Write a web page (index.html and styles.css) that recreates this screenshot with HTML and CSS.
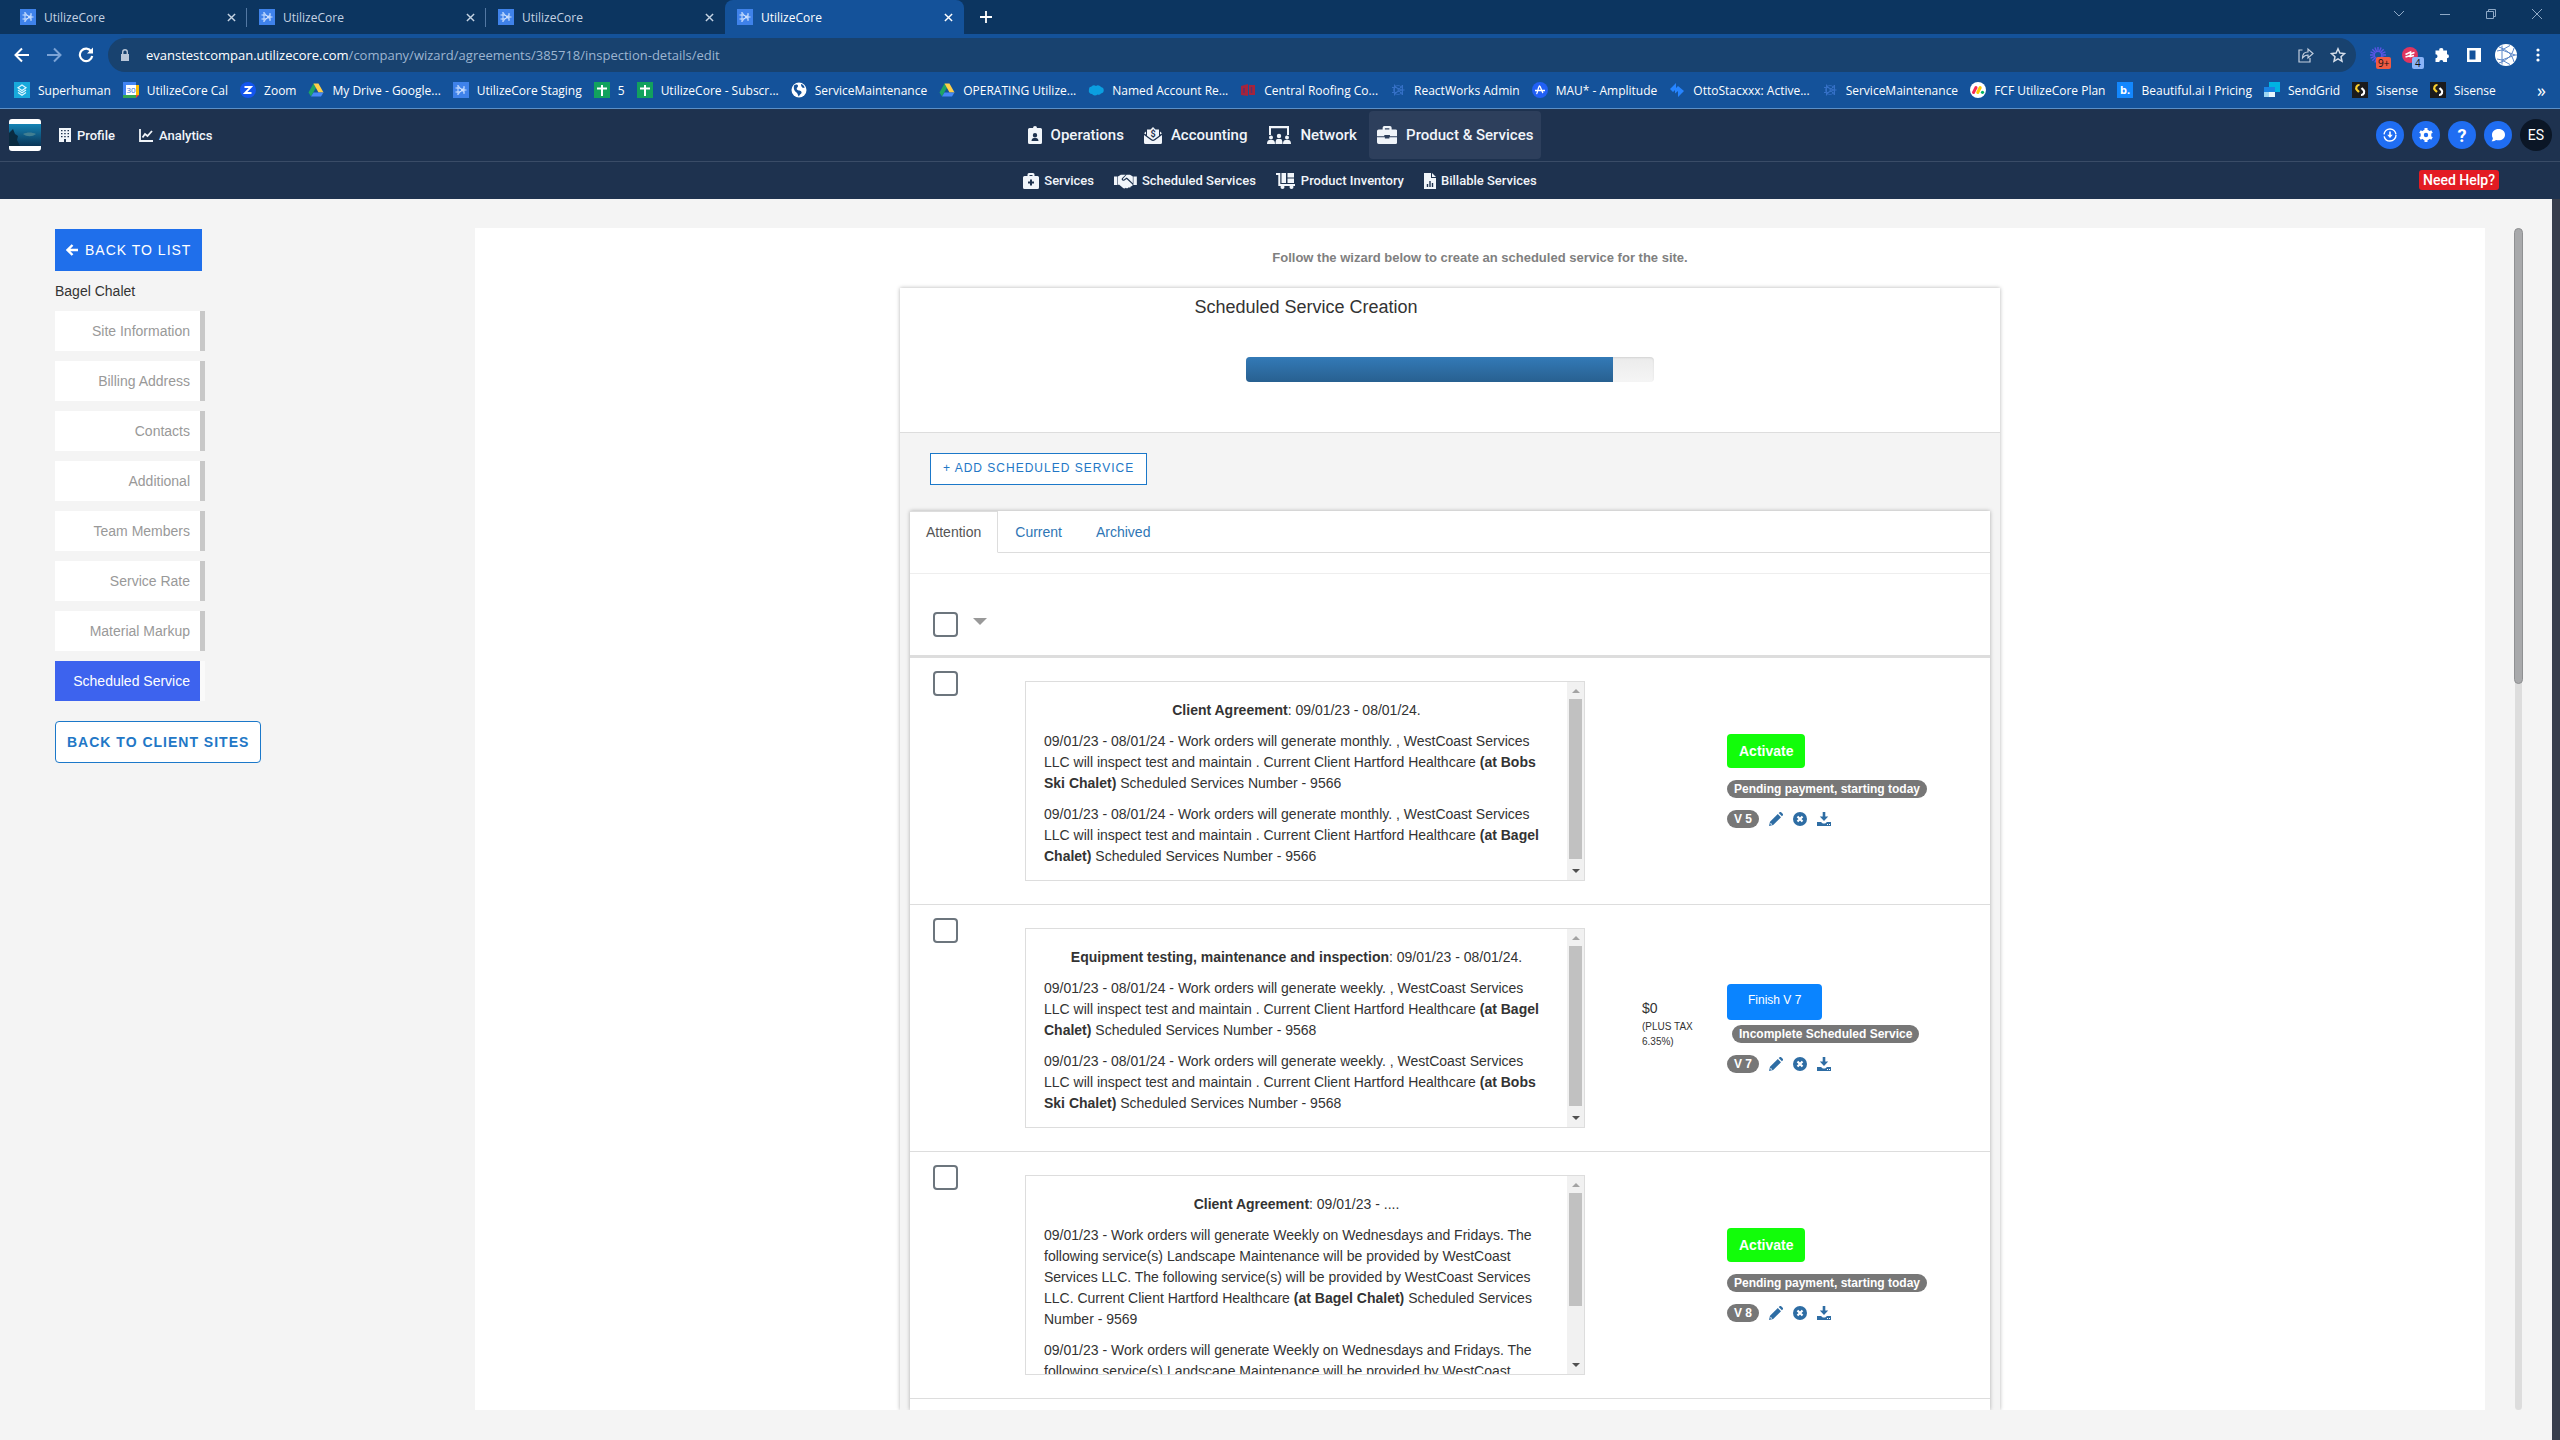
FILE: index.html
```html
<!DOCTYPE html>
<html lang="en">
<head>
    <meta charset="UTF-8">
    <meta name="viewport" content="width=device-width, initial-scale=1.0">
    <title>UtilizeCore</title>
    <link rel="stylesheet" href="styles.css">
</head>
<body>
    <!-- Shared icons -->
    <svg class="sprite" aria-hidden="true">
        <symbol id="close" viewBox="0 0 10 10"><path d="M1 1l8 8M9 1L1 9" fill="none" stroke="currentColor" stroke-width="1.6"/></symbol>
        <symbol id="core-lines" viewBox="0 0 16 16"><path d="M4.500 2.500v11M4.500 3l8 10M4.500 13l8-10M12.500 3v10M2 5.500h4l6 2.500-6 2.500H2M12 8h2.500" fill="none" stroke="currentColor" stroke-width="1"/><circle cx="8" cy="8" r="4.500" fill="none" stroke="currentColor" stroke-width=".8"/></symbol>
        <symbol id="core" viewBox="0 0 16 16"><path fill="#3f82ea" d="M0 0h16v16H0z"/><path d="M5 3v10M5 3.500l6 7M5 12.500l6-7M11 4v8M2.500 6H6l5 2-5 2H2.500M11 8h2.500" fill="none" stroke="#cfe2ff"/></symbol>
        <symbol id="drive" viewBox="0 0 16 16"><path fill="#1fa463" d="M5.500 1.500L0.500 10.500l2.500 4L8 5.700z"/><path fill="#ffcf48" d="M5.500 1.500h5l5 9h-5z"/><path fill="#4688f4" d="M3 14.500l2.500-4h10l-2.500 4z"/></symbol>
        <symbol id="sheet" viewBox="0 0 16 16"><path fill="#12a15d" d="M0 0h16v16H0z"/><path d="M8 3v11M3 6.500h10" stroke="#fff" stroke-width="2"/></symbol>
        <symbol id="sisense" viewBox="0 0 16 16"><path fill="#1b1b1d" d="M0 0h16v16H0z"/><path d="M7.500 3A3 3 0 0 0 5 8l2 2" fill="none" stroke="#f9cf2e" stroke-width="2.200"/><path d="M9.500 6l2 2a3 3 0 0 1-2.500 5" fill="none" stroke="#fff" stroke-width="2.200"/></symbol>
        <symbol id="pencil" viewBox="0 0 14 14"><path fill="currentColor" d="M0 14l1-4.200L8.800 2l3.200 3.200L4.200 13zM9.700 1.100L10.600.3a1.200 1.200 0 0 1 1.600 0l1.500 1.500a1.200 1.200 0 0 1 0 1.600l-.8.900z"/><path fill="#fff" d="M1.600 10.700l1.700 1.700-1.300.3-.7-.7z"/></symbol>
        <symbol id="remove" viewBox="0 0 14 14"><circle cx="7" cy="7" r="7" fill="currentColor"/><path d="M4.500 4.500l5 5M9.500 4.500l-5 5" stroke="#fff" stroke-width="2.200"/></symbol>
        <symbol id="download" viewBox="0 0 14 14"><path fill="currentColor" d="M5.700 0h2.600v4.500h2.900L7 9 2.800 4.500h2.900zM0 10h4l1.800 1.600h2.400L10 10h4v4H0z"/><path fill="#fff" d="M10 12h1v1h-1zM12 12h1v1h-1z"/></symbol>
    </svg>

    <header class="browser">
        <div class="tab-strip">
            <div class="browser-tab"><svg class="fav"><use href="#core"/></svg><span>UtilizeCore</span><button class="tab-close" aria-label="Close tab"><svg><use href="#close"/></svg></button></div>
            <div class="browser-tab"><svg class="fav"><use href="#core"/></svg><span>UtilizeCore</span><button class="tab-close" aria-label="Close tab"><svg><use href="#close"/></svg></button></div>
            <div class="browser-tab"><svg class="fav"><use href="#core"/></svg><span>UtilizeCore</span><button class="tab-close" aria-label="Close tab"><svg><use href="#close"/></svg></button></div>
            <div class="browser-tab selected"><svg class="fav"><use href="#core"/></svg><span>UtilizeCore</span><button class="tab-close" aria-label="Close tab"><svg><use href="#close"/></svg></button></div>
            <button class="new-tab" aria-label="New tab"><svg viewBox="0 0 12 12"><path d="M6 0v12M0 6h12" stroke="currentColor" stroke-width="1.800"/></svg></button>
            <div class="window-controls">
                <button aria-label="Search tabs"><svg viewBox="0 0 10 10"><path d="M0 2l5 5 5-5" fill="none" stroke="currentColor"/></svg></button>
                <button aria-label="Minimize"><svg viewBox="0 0 10 10"><path d="M0 5.500h10" stroke="currentColor"/></svg></button>
                <button aria-label="Restore"><svg viewBox="0 0 10 10"><path d="M.5 2.500h7v7h-7zM2.500 2.500v-2h7v7h-2" fill="none" stroke="currentColor"/></svg></button>
                <button aria-label="Close"><svg viewBox="0 0 10 10"><path d="M0 0l10 10M10 0L0 10" stroke="currentColor"/></svg></button>
            </div>
        </div>

        <div class="toolbar">
            <div class="history">
                <button aria-label="Back"><svg viewBox="0 0 16 16"><path d="M15 8H2M8 1.500L1.500 8 8 14.500" fill="none" stroke="#fff" stroke-width="2"/></svg></button>
                <button aria-label="Forward"><svg viewBox="0 0 16 16"><path d="M1 8h13M8 1.500L14.500 8 8 14.500" fill="none" stroke="#7ba3d6" stroke-width="2"/></svg></button>
                <button aria-label="Reload"><svg viewBox="0 0 16 16"><path d="M13.300 4.500A6.200 6.200 0 1 0 14.200 9" fill="none" stroke="#fff" stroke-width="2.200"/><path d="M15 0.500v6H9z" fill="#fff"/></svg></button>
            </div>
            <div class="omnibox">
                <svg class="lock" viewBox="0 0 10 12"><path fill="#b9c6d8" d="M1 5h8v7H1z"/><path d="M2.700 5V3a2.300 2.300 0 0 1 4.600 0v2" fill="none" stroke="#b9c6d8" stroke-width="1.400"/></svg>
                <div class="url" role="textbox" aria-label="Address" contenteditable="true" spellcheck="false">evanstestcompan.utilizecore.com<span>/company/wizard/agreements/385718/inspection-details/edit</span></div>
                <button aria-label="Share"><svg viewBox="0 0 16 16"><path d="M4.500 3H1v12h11v-4M4.500 11c0-4 2-6 5.500-6V2l5 4.500L10 11V8C7.500 8 6 9 4.500 11z" fill="none" stroke="#c3cfdf" stroke-width="1.200"/></svg></button>
                <button aria-label="Bookmark"><svg viewBox="0 0 16 16"><path d="M8 1.800l1.900 4.300 4.600.5-3.500 3.100 1 4.600L8 11.900l-4 2.400 1-4.600L1.500 6.600l4.600-.5z" fill="none" stroke="#d5deea" stroke-width="1.500"/></svg></button>
            </div>
            <div class="extensions">
                <button aria-label="Loom"><svg viewBox="0 0 16 16"><path d="M8 0v16M0 8h16M2.300 2.300l11.400 11.400M13.700 2.300L2.300 13.700M4.900.6l6.200 14.800M11.100.6L4.900 15.400M.6 4.900l14.800 6.200M15.400 4.900L.6 11.100" stroke="#5b55e6" stroke-width="1.400"/><circle cx="8" cy="8" r="3" fill="#14529a"/></svg><span class="ext-badge red">9+</span></button>
                <button aria-label="Mixmax"><svg viewBox="0 0 16 16"><circle cx="8" cy="8" r="8" fill="#e0355f"/><path d="M3.500 7.500l5-2.500v2l4-1.500M3.500 10l5-1.500v1l3.500-1" fill="none" stroke="#fff" stroke-width="1.600"/></svg><span class="ext-badge blue">4</span></button>
                <button aria-label="Extensions"><svg viewBox="0 0 16 16"><path fill="#fff" d="M1.500 3.500h3.800a2 2 0 1 1 3.900 0H13v3.800a2 2 0 1 1 0 4V15H9.300a2 2 0 1 0-4 0H1.500v-3.800a2 2 0 1 0 0-4z"/></svg></button>
                <button aria-label="Side panel"><svg viewBox="0 0 16 16"><path fill="#fff" d="M1 1h14v14H1zM3.500 3.500v9h6v-9z" fill-rule="evenodd"/></svg></button>
                <button aria-label="Account"><svg class="account" viewBox="0 0 22 22"><circle cx="11" cy="11" r="11" fill="#fff"/><path d="M7 1.500v19M7 6l13 5-13 5M2 7l5-1 8-4.500M2 15l5 1 8 4.500M20 11h2M4 3c8 3 13 7 15 15M4 19c8-3 13-7 15-15" fill="none" stroke="#5a86c8"/></svg></button>
                <button aria-label="Menu"><svg viewBox="0 0 16 16"><circle cx="8" cy="3" r="1.600" fill="#fff"/><circle cx="8" cy="8" r="1.600" fill="#fff"/><circle cx="8" cy="13" r="1.600" fill="#fff"/></svg></button>
            </div>
        </div>

        <nav class="bookmarks" aria-label="Bookmarks">
            <a href="#"><svg viewBox="0 0 16 16"><path fill="#18a9dc" d="M0 0h16v16H0z"/><path d="M8 3l4 2.700L8 8.500 4 5.700zM4 8l4 2.700L12 8M4 10.500l4 2.700 4-2.700" fill="none" stroke="#dff6ff" stroke-width="1.200"/></svg>Superhuman</a>
            <a href="#"><svg viewBox="0 0 16 16"><path fill="#4285f4" d="M0 0h13v3H0z"/><path fill="#4285f4" d="M0 3h3v10H0z"/><path fill="#fbbc04" d="M13 3h3v10h-3z"/><path fill="#34a853" d="M0 13h13v3H0z"/><path fill="#ea4335" d="M13 13h3l-3 3z"/><path fill="#fff" d="M3 3h10v10H3z"/><text x="8" y="11" text-anchor="middle" font-size="8" fill="#3470d6">30</text></svg>UtilizeCore Cal</a>
            <a href="#"><svg viewBox="0 0 16 16"><circle cx="8" cy="8" r="8" fill="#1355ee"/><path d="M4.500 5h6.500l-6 6h6.500" fill="none" stroke="#fff" stroke-width="1.800"/></svg>Zoom</a>
            <a href="#"><svg><use href="#drive"/></svg>My Drive - Google...</a>
            <a href="#"><svg><use href="#core"/></svg>UtilizeCore Staging</a>
            <a href="#"><svg><use href="#sheet"/></svg>5</a>
            <a href="#"><svg><use href="#sheet"/></svg>UtilizeCore - Subscr...</a>
            <a href="#"><svg viewBox="0 0 16 16"><circle cx="8" cy="8" r="7.500" fill="#fff"/><path fill="#14529a" d="M3 3.500c2-1.500 4-1 4 .5S5 6 6 7.500s4 .5 4.500 2.500-2 2-2.500 4.500c-1-.5-1-2.500-2-3.500S2 8.500 3 3.500zM10 2c2 .5 3.500 2 3.500 4-1.500 0-3.500-.5-3.500-4z"/></svg>ServiceMaintenance</a>
            <a href="#"><svg><use href="#drive"/></svg>OPERATING Utilize...</a>
            <a href="#"><svg viewBox="0 0 16 16"><path fill="#0b9fe0" d="M3.500 4.500A3.500 3.500 0 0 1 8 4a3.500 3.500 0 0 1 5 1 3.300 3.300 0 0 1 0 6.500 3 3 0 0 1-3.500 1A3.500 3.500 0 0 1 4 12a3 3 0 0 1-3-4 3 3 0 0 1 2.500-3.500z"/></svg>Named Account Re...</a>
            <a href="#"><svg viewBox="0 0 16 16"><path fill="#a5243c" d="M1 4l7-2v12l-7-1zM9 3h6v10H9z"/><path d="M4 6v5M11.500 5v6" stroke="#5d3168" stroke-width="1.500"/></svg>Central Roofing Co...</a>
            <a href="#"><svg class="dim"><use href="#core-lines"/></svg>ReactWorks Admin</a>
            <a href="#"><svg viewBox="0 0 16 16"><circle cx="8" cy="8" r="8" fill="#2160f5"/><path d="M3 8.500h10M4.500 12c1-1 2-8 3-8s2 5 3.500 7" fill="none" stroke="#fff" stroke-width="1.300"/></svg>MAU* - Amplitude</a>
            <a href="#"><svg viewBox="0 0 16 16"><path fill="#2684ff" d="M7 1v6l-3 3-3-3zM9 4l6 5-6 6V9L6 11.500V7z"/></svg>OttoStacxxx: Active...</a>
            <a href="#"><svg class="dim"><use href="#core-lines"/></svg>ServiceMaintenance</a>
            <a href="#"><svg viewBox="0 0 16 16"><circle cx="8" cy="8" r="8" fill="#fff"/><path d="M3.500 10.500L6 5.500" stroke="#f62b54" stroke-width="3" stroke-linecap="round"/><path d="M7.700 10.500l2.500-5" stroke="#ffcc00" stroke-width="3" stroke-linecap="round"/><circle cx="12.500" cy="10.300" r="1.600" fill="#00b365"/></svg>FCF UtilizeCore Plan</a>
            <a href="#"><svg viewBox="0 0 16 16"><path fill="#1388ff" d="M0 0h16v16H0z"/><text x="8" y="12" text-anchor="middle" font-size="11" font-weight="700" fill="#fff">b.</text></svg>Beautiful.ai I Pricing</a>
            <a href="#"><svg viewBox="0 0 16 16"><path fill="#9dd6f2" d="M0 5h5v10H0z"/><path fill="#e7f6fd" d="M5 10h6v5H5z"/><path fill="#1a82e2" d="M0 5h5v5H0zM5 5h6v5H5z"/><path fill="#00b3e3" d="M5 0h11v10h-5V5H5z"/></svg>SendGrid</a>
            <a href="#"><svg><use href="#sisense"/></svg>Sisense</a>
            <a href="#"><svg><use href="#sisense"/></svg>Sisense</a>
            <button class="more-bookmarks" aria-label="More bookmarks">»</button>
        </nav>
    </header>

    <div class="navbar">
        <div class="nav-left">
            <svg class="company-logo" viewBox="0 0 32 32">
                <defs><linearGradient id="sea" x1="0" y1="0" x2="0" y2="1"><stop offset="0" stop-color="#1583b4"/><stop offset="1" stop-color="#0a3557"/></linearGradient></defs>
                <path fill="#fff" d="M0 0h32v32H0z"/><path fill="url(#sea)" d="M0 5h32v22H0z"/>
                <path fill="#0a2b40" d="M0 14l4-4 2 5 3 2-1 4 3 6H0z"/><path fill="#417f92" d="M14 15c4-2 9-2 13 0-4 3-9 3-13 0z"/>
            </svg>
            <a class="nav-link" href="#"><svg viewBox="0 0 12 14"><path fill="currentColor" fill-rule="evenodd" d="M0 0h12v14H0zM2 2v1.300h1.500V2zm3.200 0v1.300h1.500V2zm3.300 0v1.300H10V2zM2 5v1.300h1.500V5zm3.200 0v1.300h1.500V5zm3.300 0v1.300H10V5zM2 8v1.300h1.500V8zm3.200 0v1.300h1.500V8zm3.300 0v1.300H10V8zM5 11v3h2v-3z"/></svg>Profile</a>
            <a class="nav-link" href="#"><svg viewBox="0 0 14 14"><path d="M1 1v12h13M3.500 9.500L6 6l2.500 2L13 3" fill="none" stroke="currentColor" stroke-width="1.800"/></svg>Analytics</a>
        </div>
        <nav class="nav-center">
            <a class="nav-link big" href="#"><svg viewBox="0 0 14 18"><path fill="currentColor" fill-rule="evenodd" d="M1.500 2H5a2 2 0 0 1 4 0h3.500A1.500 1.500 0 0 1 14 3.500v13a1.500 1.500 0 0 1-1.500 1.500h-11A1.500 1.500 0 0 1 0 16.500v-13A1.500 1.500 0 0 1 1.500 2zM7 7a2.200 2.200 0 1 0 0 4.400A2.200 2.200 0 0 0 7 7zm-3.500 8h7c0-2-1.300-3-2.300-3H5.800c-1 0-2.300 1-2.300 3z"/></svg>Operations</a>
            <a class="nav-link big" href="#"><svg viewBox="0 0 18 18"><path fill="currentColor" d="M0 9l7 5.300a3.200 3.200 0 0 0 4 0L18 9v7.500a1.500 1.500 0 0 1-1.500 1.500h-15A1.500 1.500 0 0 1 0 16.500zM0 7.200l2-1.600v3zM18 7.200l-2-1.600v3z"/><path fill="currentColor" d="M3 3.500h3.500L9 1l2.500 2.500H15v6.300l-4.500 3.300a2.500 2.500 0 0 1-3 0L3 9.800z"/><text x="9" y="11" text-anchor="middle" font-size="9" font-weight="700" fill="#1e324f">$</text></svg>Accounting</a>
            <a class="nav-link big" href="#"><svg viewBox="0 0 24 18"><path fill="currentColor" fill-rule="evenodd" d="M2 0h20v9h-2V2.200H4V9H2z"/><circle cx="4" cy="11.500" r="2" fill="currentColor"/><circle cx="12" cy="10" r="2.200" fill="currentColor"/><circle cx="20" cy="11.500" r="2" fill="currentColor"/><path fill="currentColor" d="M0 18c0-2.500 1-4 2.500-4h3C7 14 8 15.500 8 18zM8.500 18c0-3 .5-5 2-5h3c1.500 0 2 2 2 5zM16 18c0-2.500 1-4 2.500-4h3c1.500 0 2.500 1.500 2.500 4z"/></svg>Network</a>
            <a class="nav-link big current" href="#"><svg viewBox="0 0 18 16"><path fill="currentColor" fill-rule="evenodd" d="M5 3V1.500A1.500 1.500 0 0 1 6.500 0h5A1.500 1.500 0 0 1 13 1.500V3h3.500A1.500 1.500 0 0 1 18 4.500V9h-6.500V8h-5v1H0V4.500A1.500 1.500 0 0 1 1.500 3zM7 2v1h4V2zM0 10h7v1h4v-1h7v4.500a1.500 1.500 0 0 1-1.500 1.500h-15A1.500 1.500 0 0 1 0 14.500z"/></svg>Product &amp; Services</a>
        </nav>
        <div class="nav-right">
            <button class="round" aria-label="Downloads"><svg viewBox="0 0 16 16"><circle cx="8" cy="8" r="6" fill="none" stroke="currentColor" stroke-width="1.400" stroke-dasharray="17 2"/><path fill="currentColor" d="M7.200 4.500h1.600v3.300h2L8 11 5.200 7.800h2z"/></svg></button>
            <button class="round" aria-label="Settings"><svg viewBox="0 0 16 16"><circle cx="8" cy="8" r="3.800" fill="none" stroke="currentColor" stroke-width="3.200"/><path d="M8 1v3M8 12v3M2 4.500L4.500 6M11.500 10l2.500 1.500M2 11.500L4.500 10M11.500 6L14 4.500" stroke="currentColor" stroke-width="3"/></svg></button>
            <button class="round" aria-label="Help">?</button>
            <button class="round" aria-label="Chat"><svg viewBox="0 0 16 16"><path fill="currentColor" d="M8.500 2C12.600 2 15 4.500 15 7.700s-2.700 5.600-6.500 5.600c-.9 0-1.700-.1-2.400-.4-1 .8-2.600 1.300-4.600 1.300 1-1 1.500-2.200 1.300-3.200A5 5 0 0 1 2 7.700C2 4.500 4.700 2 8.500 2z"/></svg></button>
            <button class="round user">ES</button>
        </div>
    </div>

    <div class="subnav">
        <nav class="subnav-links">
            <a class="nav-link" href="#"><svg viewBox="0 0 16 16"><path fill="currentColor" fill-rule="evenodd" d="M4.500 3V1.500A1.500 1.500 0 0 1 6 0h4a1.500 1.500 0 0 1 1.500 1.500V3h3A1.500 1.500 0 0 1 16 4.500v10a1.500 1.500 0 0 1-1.500 1.500h-13A1.500 1.500 0 0 1 0 14.500v-10A1.500 1.500 0 0 1 1.500 3zm2-1v1h3V2zM7 6.500v2H5v2h2v2h2v-2h2v-2H9v-2z"/></svg>Services</a>
            <a class="nav-link" href="#"><svg viewBox="0 0 20 14"><path fill="currentColor" d="M0 3h3v7.500H0zM17 3h3v7.500h-3zM3.500 3L6 1.500h4.200L7 4.600c-1 1.200.7 3 2.200 1.900L11 5.200l5 4.600c.9 1-.3 2.200-1.300 1.500.2 1.200-1 1.900-2 1.100-.3 1-1.500 1.300-2.400.5-.7.800-1.900.7-2.600 0L4.600 10.300H3.500zM11 1.500h3L16.500 3v6L12 4.600l-1-.6-2.300 1.700c-.7.4-1.200-.3-.7-.8z"/></svg>Scheduled Services</a>
            <a class="nav-link" href="#"><svg viewBox="0 0 20 16"><path d="M0 1h3.300v11H19" fill="none" stroke="currentColor" stroke-width="2"/><path fill="currentColor" d="M5.500 0H10v10H5.500zM11.500 0H18v4.500h-6.500zM11.500 5.500H18V10h-6.500z"/><circle cx="6.500" cy="14" r="2" fill="currentColor"/><circle cx="15.500" cy="14" r="2" fill="currentColor"/></svg>Product Inventory</a>
            <a class="nav-link" href="#"><svg viewBox="0 0 12 16"><path fill="currentColor" d="M0 0h7v5h5v11H0zM8 0l4 4H8z"/><path d="M3.500 14v-3M6 14V8M8.500 14v-4" stroke="#1e324f" stroke-width="1.400"/></svg>Billable Services</a>
        </nav>
        <button class="need-help">Need Help?</button>
    </div>

    <div class="page">
        <aside class="sidebar">
            <a class="back-to-list" href="#"><svg viewBox="0 0 12 12"><path d="M12 6H2M6.500 1L1.500 6l5 5" fill="none" stroke="currentColor" stroke-width="2.400"/></svg>BACK TO LIST</a>
            <p class="site-name">Bagel Chalet</p>
            <ul class="steps">
                <li><a href="#">Site Information</a></li>
                <li><a href="#">Billing Address</a></li>
                <li><a href="#">Contacts</a></li>
                <li><a href="#">Additional</a></li>
                <li><a href="#">Team Members</a></li>
                <li><a href="#">Service Rate</a></li>
                <li><a href="#">Material Markup</a></li>
                <li><a class="active" href="#">Scheduled Service</a></li>
            </ul>
            <a class="back-to-sites" href="#">BACK TO CLIENT SITES</a>
        </aside>

        <main class="content">
            <p class="intro">Follow the wizard below to create an scheduled service for the site.</p>
            <section class="wizard">
                <div class="wizard-header">
                    <h1>Scheduled Service Creation</h1>
                    <div class="progress" role="progressbar" aria-label="Wizard progress" aria-valuenow="90" aria-valuemin="0" aria-valuemax="100"><div class="progress-bar" style="width: 90%"></div></div>
                </div>
                <button class="add-service">+ ADD SCHEDULED SERVICE</button>
                <div class="panel">
                    <div class="tabs" role="tablist">
                        <a class="active" role="tab" href="#">Attention</a>
                        <a role="tab" href="#">Current</a>
                        <a role="tab" href="#">Archived</a>
                    </div>
                    <table class="services">
                        <thead>
                            <tr>
                                <th class="col-check"><div class="check-all"><input type="checkbox" aria-label="Select all"><button class="caret" aria-label="Bulk actions"></button></div></th>
                                <th class="col-text"></th>
                                <th class="col-price"></th>
                                <th></th>
                            </tr>
                        </thead>
                        <tbody>
                            <tr>
                                <td class="cell-check"><input type="checkbox" aria-label="Select service 9566"></td>
                                <td>
                                    <div class="scroll-box">
                                        <div class="scroll-text">
                                            <p class="heading"><b>Client Agreement</b>: 09/01/23 - 08/01/24.</p>
                                            <p>09/01/23 - 08/01/24 - Work orders will generate monthly. , WestCoast Services LLC will inspect test and maintain . Current Client Hartford Healthcare <b>(at Bobs Ski Chalet)</b> Scheduled Services Number - 9566</p>
                                            <p>09/01/23 - 08/01/24 - Work orders will generate monthly. , WestCoast Services LLC will inspect test and maintain . Current Client Hartford Healthcare <b>(at Bagel Chalet)</b> Scheduled Services Number - 9566</p>
                                        </div>
                                        <div class="scrollbar"><div class="thumb"></div></div>
                                    </div>
                                </td>
                                <td></td>
                                <td>
                                    <div class="actions">
                                        <button class="activate">Activate</button>
                                        <span class="badge status">Pending payment, starting today</span>
                                        <div class="version"><span class="badge">V 5</span><a href="#" aria-label="Edit"><svg><use href="#pencil"/></svg></a><a href="#" aria-label="Remove"><svg><use href="#remove"/></svg></a><a href="#" aria-label="Download"><svg><use href="#download"/></svg></a></div>
                                    </div>
                                </td>
                            </tr>
                            <tr>
                                <td class="cell-check"><input type="checkbox" aria-label="Select service 9568"></td>
                                <td>
                                    <div class="scroll-box">
                                        <div class="scroll-text">
                                            <p class="heading"><b>Equipment testing, maintenance and inspection</b>: 09/01/23 - 08/01/24.</p>
                                            <p>09/01/23 - 08/01/24 - Work orders will generate weekly. , WestCoast Services LLC will inspect test and maintain . Current Client Hartford Healthcare <b>(at Bagel Chalet)</b> Scheduled Services Number - 9568</p>
                                            <p>09/01/23 - 08/01/24 - Work orders will generate weekly. , WestCoast Services LLC will inspect test and maintain . Current Client Hartford Healthcare <b>(at Bobs Ski Chalet)</b> Scheduled Services Number - 9568</p>
                                        </div>
                                        <div class="scrollbar"><div class="thumb"></div></div>
                                    </div>
                                </td>
                                <td class="price">$0<small>(PLUS TAX<br>6.35%)</small></td>
                                <td>
                                    <div class="actions">
                                        <button class="finish">Finish V 7</button>
                                        <span class="badge incomplete">Incomplete Scheduled Service</span>
                                        <div class="version"><span class="badge">V 7</span><a href="#" aria-label="Edit"><svg><use href="#pencil"/></svg></a><a href="#" aria-label="Remove"><svg><use href="#remove"/></svg></a><a href="#" aria-label="Download"><svg><use href="#download"/></svg></a></div>
                                    </div>
                                </td>
                            </tr>
                            <tr>
                                <td class="cell-check"><input type="checkbox" aria-label="Select service 9569"></td>
                                <td>
                                    <div class="scroll-box">
                                        <div class="scroll-text">
                                            <p class="heading"><b>Client Agreement</b>: 09/01/23 - ....</p>
                                            <p>09/01/23 - Work orders will generate Weekly on Wednesdays and Fridays. The following service(s) Landscape Maintenance will be provided by WestCoast Services LLC. The following service(s) will be provided by WestCoast Services LLC. Current Client Hartford Healthcare <b>(at Bagel Chalet)</b> Scheduled Services Number - 9569</p>
                                            <p>09/01/23 - Work orders will generate Weekly on Wednesdays and Fridays. The following service(s) Landscape Maintenance will be provided by WestCoast</p>
                                        </div>
                                        <div class="scrollbar"><div class="thumb short"></div></div>
                                    </div>
                                </td>
                                <td></td>
                                <td>
                                    <div class="actions">
                                        <button class="activate">Activate</button>
                                        <span class="badge status">Pending payment, starting today</span>
                                        <div class="version"><span class="badge">V 8</span><a href="#" aria-label="Edit"><svg><use href="#pencil"/></svg></a><a href="#" aria-label="Remove"><svg><use href="#remove"/></svg></a><a href="#" aria-label="Download"><svg><use href="#download"/></svg></a></div>
                                    </div>
                                </td>
                            </tr>
                        </tbody>
                    </table>
                </div>
            </section>
        </main>
        <div class="content-scroll"><div class="content-thumb"></div></div>
    </div>
</body>
</html>
```

FILE: styles.css
```css
* {
    box-sizing: border-box;
}

body {
    margin: 0;
    height: 100vh;
    display: flex;
    flex-direction: column;
    overflow: hidden;
    background-color: #f4f4f4;
    color: #333;
    font-family: "Liberation Sans", Arial, sans-serif;
    font-size: 14px;
    line-height: 21px;
}

button {
    padding: 0;
    border: none;
    background: none;
    color: inherit;
    font: inherit;
    cursor: pointer;
}

a {
    text-decoration: none;
}

svg {
    display: block;
    flex: none;
}

.sprite {
    display: none;
}

/* Browser chrome */
.browser {
    flex: none;
    background-color: #14529a;
    border-bottom: 1px solid #5b8fc7;
    color: #fff;
    font-family: "Open Sans", "Segoe UI", sans-serif;
    font-size: 12px;
}

.tab-strip {
    display: flex;
    height: 34px;
    padding-left: 8px;
    background-color: #0c3560;
}

.browser-tab {
    display: flex;
    align-items: center;
    gap: 8px;
    width: 239px;
    padding: 0 11px 0 12px;
    background: linear-gradient(#5378a3, #5378a3) right 8px / 1px 19px no-repeat;
    color: #c5d3e3;
}

.browser-tab:nth-child(3) {
    background: none;
}

.browser-tab.selected {
    background: #14529a;
    border-radius: 8px 8px 0 0;
    color: #fff;
}

.fav {
    width: 16px;
    height: 16px;
}

.tab-close {
    margin-left: auto;
}

.tab-close svg {
    width: 9px;
    height: 9px;
}

.new-tab {
    padding: 0 16px;
}

.new-tab svg {
    width: 12px;
    height: 12px;
}

.window-controls {
    display: flex;
    margin-left: auto;
    height: 28px;
    color: #8fa9c6;
}

.window-controls button {
    display: flex;
    align-items: center;
    justify-content: center;
    width: 46px;
}

.window-controls svg {
    width: 10px;
    height: 10px;
}

.toolbar {
    display: flex;
    align-items: center;
    height: 38px;
    padding-top: 4px;
}

.history {
    display: flex;
    gap: 16px;
    padding: 0 14px;
}

.history svg,
.omnibox button svg,
.extensions svg {
    width: 16px;
    height: 16px;
}

.omnibox {
    flex: 1;
    display: flex;
    align-items: center;
    gap: 16px;
    height: 34px;
    padding: 0 10px 0 12px;
    border-radius: 17px;
    background-color: #18426f;
}

.lock {
    width: 10px;
    height: 12px;
}

.url {
    flex: 1;
    font-size: 13px;
}

.url span {
    color: #9db5d1;
}

.extensions {
    display: flex;
    align-items: center;
    gap: 16px;
    padding: 0 14px;
}

.extensions button {
    position: relative;
}

.extensions .account {
    width: 22px;
    height: 22px;
    margin: 0 -3px;
}

.ext-badge {
    position: absolute;
    left: 6px;
    top: 10px;
    padding: 0 2px;
    border-radius: 2px;
    color: #111;
    font-size: 10px;
    line-height: 12px;
}

.ext-badge.red {
    background-color: #f05a42;
}

.ext-badge.blue {
    left: 10px;
    padding: 0 3px;
    background-color: #8ab4f8;
}

.bookmarks {
    display: flex;
    align-items: center;
    gap: 12px;
    height: 36px;
    padding: 0 14px;
    white-space: nowrap;
}

.bookmarks a {
    display: flex;
    align-items: center;
    gap: 8px;
    color: #fff;
}

.bookmarks svg {
    width: 16px;
    height: 16px;
}

.dim {
    color: #3570c6;
}

.more-bookmarks {
    margin-left: auto;
    font-size: 18px;
}

/* App navigation */
.navbar,
.subnav {
    flex: none;
    display: grid;
    grid-template-columns: 1fr auto 1fr;
    align-items: center;
    background-color: #1e324f;
    color: #f1f5fa;
    font-family: Roboto, sans-serif;
}

.navbar {
    height: 53px;
    padding: 0 8px 0 9px;
    border-bottom: 1px solid #3a4c67;
}

.subnav {
    height: 37px;
}

.nav-left,
.nav-center,
.nav-right,
.subnav-links,
.nav-link {
    display: flex;
    align-items: center;
}

.nav-left {
    gap: 18px;
}

.nav-center {
    gap: 4px;
}

.nav-link {
    gap: 6px;
    color: inherit;
    font-size: 13px;
    font-weight: 500;
}

.nav-link svg {
    height: 14px;
}

.nav-left .nav-link + .nav-link {
    margin-left: 6px;
}

.nav-link.big {
    height: 48px;
    padding: 0 8px;
    gap: 9px;
    border-radius: 4px;
    font-size: 15px;
}

.nav-link.big svg {
    height: 18px;
}

.nav-link.current {
    background-color: #2d3f5c;
}

.company-logo {
    width: 32px;
    height: 32px;
    border-radius: 3px;
}

.nav-right {
    justify-content: flex-end;
    gap: 8px;
}

.round {
    display: flex;
    align-items: center;
    justify-content: center;
    width: 28px;
    height: 28px;
    border-radius: 50%;
    background-color: #1f6df2;
    color: #fff;
    font-size: 18px;
    font-weight: 700;
}

.round svg {
    width: 16px;
    height: 16px;
}

.round.user {
    width: 32px;
    height: 32px;
    background-color: #0b1626;
    font-size: 14px;
    font-weight: 400;
}

.subnav-links {
    grid-column: 2;
    gap: 20px;
}

.subnav-links .nav-link {
    gap: 5px;
}

.subnav-links svg {
    height: 16px;
}

.need-help {
    justify-self: end;
    margin: 0 61px 2px 0;
    padding: 0 4px;
    border-radius: 3px;
    background-color: #e31b23;
    color: #fff;
    font-size: 14px;
    font-weight: 500;
    line-height: 20px;
}

/* Page */
.page {
    flex: 1;
    display: flex;
    min-height: 0;
    padding: 29px 29px 30px 55px;
    border-right: 8px solid #383e4c;
}

.sidebar {
    flex: none;
    width: 420px;
    padding-top: 1px;
}

.back-to-list,
.back-to-sites {
    display: flex;
    align-items: center;
    width: max-content;
    height: 42px;
    padding: 0 11px;
}

.back-to-list {
    gap: 7px;
    background-color: #1f6feb;
    color: #fff;
    letter-spacing: 1px;
}

.back-to-list svg {
    width: 12px;
    height: 12px;
}

.site-name {
    margin: 10px 0 9px;
}

.steps {
    display: flex;
    flex-direction: column;
    gap: 10px;
    width: 150px;
    margin: 0 0 20px;
    padding: 0;
    list-style: none;
}

.steps a {
    display: block;
    padding: 0 10px;
    border-right: 5px solid #c8c8c8;
    background-color: #fff;
    color: #999;
    line-height: 40px;
    text-align: right;
}

.steps a.active {
    border-color: #fafafa;
    background-color: #3d63ee;
    color: #fff;
}

.back-to-sites {
    border: 1px solid #1b78c9;
    border-radius: 4px;
    background-color: #fff;
    color: #2277c6;
    font-weight: 700;
    letter-spacing: 1px;
}

.content {
    flex: 1;
    display: flex;
    flex-direction: column;
    padding: 0 60px 0 0;
    overflow: hidden;
    background-color: #fff;
}

.intro {
    margin: 19px -60px 20px 0;
    color: #808080;
    font-size: 13px;
    font-weight: 700;
    text-align: center;
}

.wizard {
    flex: 1;
    display: flex;
    flex-direction: column;
    align-items: flex-start;
    width: 100%;
    max-width: 1100px;
    min-height: 0;
    margin: 0 auto;
    background-color: #f4f4f4;
    box-shadow: 0 0 4px rgba(0, 0, 0, 0.3);
}

.wizard-header {
    align-self: stretch;
    height: 145px;
    padding-top: 7px;
    border-bottom: 1px solid #ddd;
    background-color: #fff;
}

.wizard-header h1 {
    margin: 0 288px 38px 0;
    font-size: 18px;
    font-weight: 400;
    line-height: 24px;
    text-align: center;
}

.progress {
    width: 408px;
    height: 25px;
    margin: 0 auto;
    border-radius: 4px;
    overflow: hidden;
    background: linear-gradient(#ebebeb, #f5f5f5);
    box-shadow: inset 0 1px 2px rgba(0, 0, 0, 0.1);
}

.progress-bar {
    height: 100%;
    background: linear-gradient(#337ab7, #286090);
}

.add-service {
    height: 32px;
    margin: 20px 0 26px 30px;
    padding: 0 12px 2px;
    border: 1px solid #1b78c9;
    background-color: #fff;
    color: #2277c6;
    font-size: 12px;
    letter-spacing: 1px;
}

.panel {
    flex: 1;
    align-self: stretch;
    min-height: 0;
    margin: 0 10px;
    background-color: #fff;
    box-shadow: 0 0 4px rgba(0, 0, 0, 0.3);
}

.tabs {
    display: flex;
    height: 42px;
    margin-bottom: 20px;
    border-bottom: 1px solid #ddd;
}

.tabs a {
    height: 42px;
    padding: 0 17px;
    color: #2e76b5;
    line-height: 42px;
}

.tabs a.active {
    padding: 0 16px;
    border: 1px solid #ddd;
    border-bottom-color: #fff;
    border-left: none;
    background-color: #fff;
    color: #555;
    line-height: 40px;
}

.services {
    width: 100%;
    table-layout: fixed;
    border-collapse: separate;
    border-spacing: 0;
    border-top: 1px solid #eee;
}

.services th,
.services td {
    padding: 0;
    border-bottom: 1px solid #ddd;
}

.services th {
    height: 84px;
    border-bottom-width: 3px;
    vertical-align: top;
}

.services td {
    height: 247px;
    vertical-align: middle;
}

.col-check {
    width: 115px;
}

.col-text {
    width: 617px;
}

.col-price {
    width: 85px;
}

.services input {
    display: block;
    width: 25px;
    height: 25px;
    margin: 0;
    border: 2px solid #6c757d;
    border-radius: 4px;
    background-color: #fff;
    appearance: none;
}

.check-all {
    display: flex;
    gap: 15px;
    padding: 38px 0 0 23px;
}

.caret {
    align-self: flex-start;
    margin-top: 6px;
    border: 7px solid transparent;
    border-top-color: #999;
    border-bottom: none;
}

.services .cell-check {
    padding: 13px 0 0 23px;
    vertical-align: top;
}

.scroll-box {
    display: flex;
    width: 560px;
    height: 200px;
    border: 1px solid #ddd;
}

.scroll-text {
    flex: 1;
    overflow: hidden;
    padding: 18px;
}

.scroll-text p {
    margin: 0 0 10px;
}

.scroll-text .heading {
    text-align: center;
}

.scrollbar {
    display: flex;
    flex-direction: column;
    align-items: center;
    width: 17px;
    background-color: #f1f1f1;
}

.scrollbar::before,
.scrollbar::after {
    content: "";
    margin: 7px 0 6px;
    border: 4px solid transparent;
    border-bottom-color: #a3a3a3;
    border-top: none;
}

.scrollbar::after {
    margin: auto 0 7px;
    border: 4px solid transparent;
    border-top-color: #505050;
    border-bottom: none;
}

.thumb {
    width: 13px;
    height: 160px;
    background-color: #c1c1c1;
}

.thumb.short {
    height: 113px;
}

.services .price {
    padding-bottom: 10px;
}

.price small {
    display: block;
    font-size: 10px;
    line-height: 15px;
}

.actions {
    display: flex;
    flex-direction: column;
    align-items: flex-start;
}

.activate,
.finish {
    height: 34px;
    padding: 0 12px;
    border-radius: 4px;
    background-color: #12fd0a;
    color: #fff;
    font-weight: 700;
}

.finish {
    height: 36px;
    padding: 0 21px 2px;
    background-color: #0a84ff;
    font-size: 12px;
    font-weight: 400;
}

.badge {
    padding: 0 7px;
    border-radius: 9px;
    background-color: #777;
    color: #fff;
    font-size: 12px;
    font-weight: 700;
    line-height: 18px;
}

.badge.status {
    margin-top: 12px;
}

.badge.incomplete {
    margin: 5px 0 0 5px;
}

.version {
    display: flex;
    align-items: center;
    gap: 10px;
    margin-top: 12px;
}

.version a {
    color: #2e6da4;
}

.version svg {
    width: 14px;
    height: 14px;
}

.content-scroll {
    flex: none;
    width: 7px;
    margin: 0 1px 0 30px;
    border-radius: 4px;
    background-color: #ddd;
}

.content-thumb {
    width: 9px;
    height: 456px;
    margin-left: -1px;
    border: 1px solid #8f9092;
    border-radius: 5px;
    background-color: #a8a9ab;
}
```
